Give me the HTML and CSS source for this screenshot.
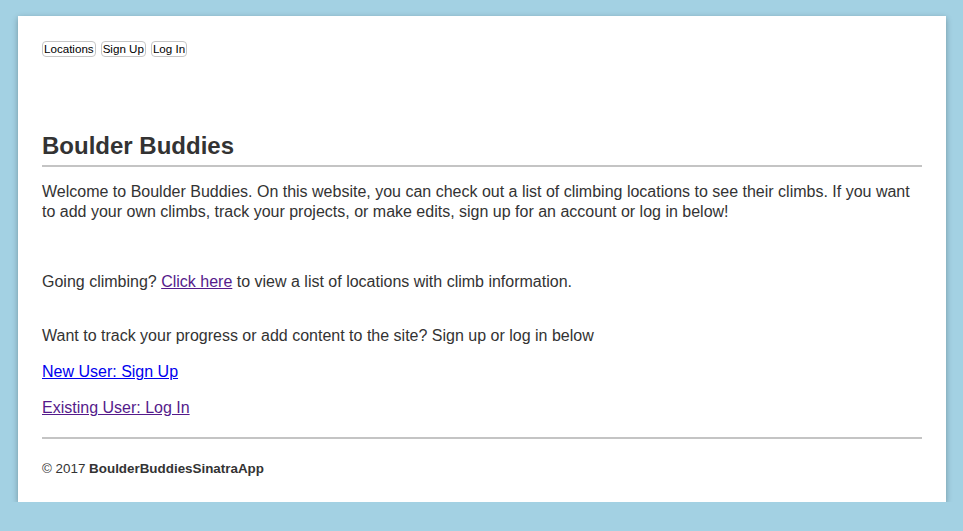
FILE: index.html
```html
<!DOCTYPE html>
<html>
<head>
<meta charset="utf-8">
<link rel="stylesheet" href="styles.css">
</head>
<body>
<div class="card">
  <nav class="nav">
    <button class="btn">Locations</button>
    <button class="btn">Sign Up</button>
    <button class="btn">Log In</button>
  </nav>
  <h1 class="title">Boulder Buddies</h1>
  <hr class="rule">
  <p class="intro">Welcome to Boulder Buddies. On this website, you can check out a list of climbing locations to see their climbs. If you want to add your own climbs, track your projects, or make edits, sign up for an account or log in below!</p>
  <p class="going">Going climbing? <a class="visited" href="#">Click here</a> to view a list of locations with climb information.</p>
  <p class="want">Want to track your progress or add content to the site? Sign up or log in below</p>
  <p class="link-line"><a class="fresh" href="#">New User: Sign Up</a></p>
  <p class="link-line"><a class="visited" href="#">Existing User: Log In</a></p>
  <hr class="rule foot-rule">
  <footer class="footer">© 2017 <strong>BoulderBuddiesSinatraApp</strong></footer>
</div>
</body>
</html>
```
FILE: styles.css
```css
html, body {
  margin: 0;
  padding: 0;
}
body {
  background: #a3d1e3;
  font-family: "Liberation Sans", Arial, sans-serif;
  color: #333;
  padding: 16px 0 0 18px;
}
.card {
  width: 928px;
  height: 486px;
  box-sizing: border-box;
  background: #fff;
  padding: 25px 24px 0 24px;
  box-shadow: 0 2px 6px rgba(0, 0, 0, 0.3);
}
.nav {
  display: flex;
  gap: 5px;
  height: 16px;
}
.btn {
  font-family: "Liberation Sans", Arial, sans-serif;
  font-size: 11.6px;
  color: #000;
  background: #fff;
  border: 1px solid #c6c6c6;
  border-radius: 4px;
  padding: 0 1px;
  height: 16px;
  line-height: 14px;
}
.title {
  font-size: 24px;
  font-weight: bold;
  margin: 75px 0 0 0;
  line-height: 28px;
}
.rule {
  border: 0;
  height: 2px;
  background: #c4c4c4;
  margin: 5px 0 0 0;
}
.intro {
  font-size: 16px;
  line-height: 20px;
  margin: 15px 0 0 0;
}
.going {
  font-size: 16px;
  line-height: 20px;
  margin: 50px 0 0 0;
}
.want {
  font-size: 16px;
  line-height: 20px;
  margin: 34px 0 0 0;
}
.link-line {
  font-size: 16px;
  line-height: 20px;
  margin: 16px 0 0 0;
}
a.fresh { color: #0000ee; }
a.visited { color: #551a8b; }
.foot-rule {
  margin-top: 19px;
}
.footer {
  font-size: 13.4px;
  margin-top: 22px;
  line-height: 16px;
}
```
